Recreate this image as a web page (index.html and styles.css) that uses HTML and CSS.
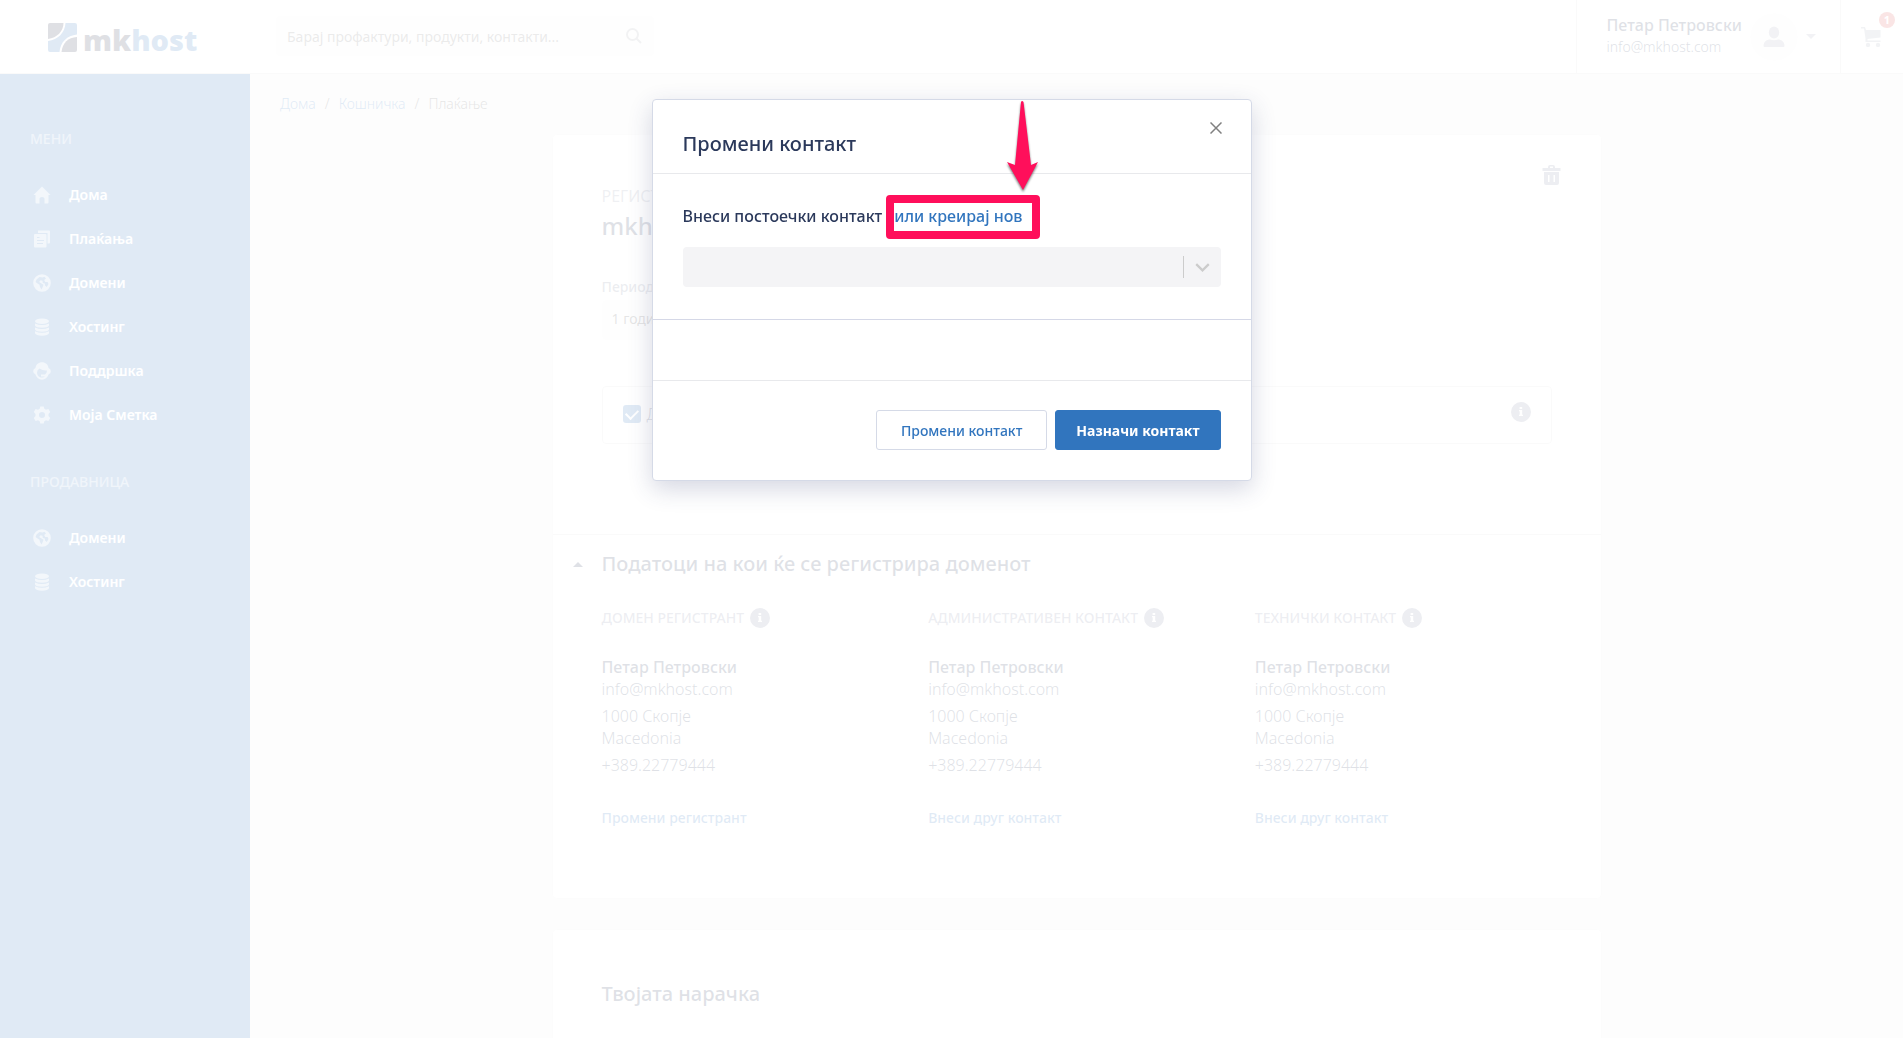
FILE: index.html
```html
<!DOCTYPE html>
<html lang="mk">
<head>
    <meta charset="UTF-8">
    <meta name="viewport" content="width=device-width, initial-scale=1">
    <title>mkhost - Плаќање</title>
    <link rel="stylesheet" href="styles.css">
</head>
<body>
<!-- shared icons -->
<svg class="sprite" width="0" height="0" aria-hidden="true">
    <symbol id="i-home" viewBox="0 0 18 18"><path d="M9 0.5 17.5 9H15.5V16.5Q15.5 17.5 14.5 17.5H11.5V12.5Q11.5 11 9 11T6.5 12.5V17.5H3.5Q2.5 17.5 2.5 16.5V9H0.500Z"/></symbol>
    <symbol id="i-docs" viewBox="0 0 18 18"><path d="M5 0.500H16Q17 0.500 17 1.500V12.500Q17 13.500 16 13.500H14.500V3H5Z"/><path fill-rule="evenodd" d="M2 4H12.500Q13.500 4 13.500 5V16.500Q13.500 17.500 12.500 17.500H2Q1 17.500 1 16.500V5Q1 4 2 4ZM4 7V8H6.500V7ZM4 10V11H11V10ZM4 13V14H10V13Z"/></symbol>
    <symbol id="i-globe" viewBox="0 0 18 18"><path fill-rule="evenodd" d="M9 0.200A8.800 8.800 0 1 1 9 17.800 8.800 8.800 0 0 1 9 0.200ZM6.500 3 9.500 3.400 11.500 2.800 13 4.500 11.200 6 12.200 8H14.600L15.500 10 13.800 13 12 11.500 11.800 9.500 9.800 9 9.500 6.800 7.500 6.200 6.200 8 8.500 9.500 10.500 10.800 9.500 13.500 8.500 15.500 7 13 6.500 10.800 3.800 9 2.600 8 3.500 5.500Z"/></symbol>
    <symbol id="i-db" viewBox="0 0 18 18"><ellipse cx="9" cy="3.300" rx="7" ry="2.800"/><path d="M2 5.500Q9 8.500 16 5.500V7.500Q15 9.700 9 9.700T2 7.500ZM2 9.400Q9 12.400 16 9.400V11.500Q15 13.700 9 13.700T2 11.500ZM2 13.300Q9 16.300 16 13.300V15.300Q15 17.700 9 17.700T2 15.300Z"/></symbol>
    <symbol id="i-support" viewBox="0 0 18 18"><path fill-rule="evenodd" d="M9 0.300C12.500 0.300 15 2.500 15.500 6Q17.800 7 17.800 9.300T15.700 12.300C14.500 15.800 12 17.700 9 17.700S3.500 15.800 2.300 12.300Q0.200 11.500 0.200 9.300T2.500 6C3 2.500 5.500 0.300 9 0.300ZM6.500 6.500Q4 8 4 10.500C4 13.500 6.300 15.600 9 15.600Q10.800 15.600 12 14.500H8V12.500H12Q13.800 11.800 14 8.500 10 9 6.500 6.500Z"/></symbol>
    <symbol id="i-gear" viewBox="0 0 18 18"><path fill-rule="evenodd" d="M7.300 0.600H10.700L11.300 2.700 13 3.700 15.400 3 17.200 6 15.500 7.900V10.100L17.200 12 15.400 15 13 14.300 11.300 15.300 10.700 17.400H7.300L6.700 15.300 5 14.300 2.600 15 0.800 12 2.500 10.100V7.900L0.800 6 2.600 3 5 3.700 6.700 2.700ZM9 6A3 3 0 1 0 9 12 3 3 0 0 0 9 6Z"/></symbol>
    <symbol id="i-info" viewBox="0 0 20 20"><path fill-rule="evenodd" d="M10 0A10 10 0 1 1 10 20 10 10 0 0 1 10 0ZM8.600 5V7H11.200V5ZM8 8V9.200H8.700V12.800H8V14H12V12.800H11.200V8Z"/></symbol>
</svg>

<div class="app">
    <header class="topbar">
        <a class="logo" href="#" aria-label="mkhost">
            <svg class="logo-mark" viewBox="0 0 29 29" width="29" height="29">
                <path class="navy" d="M2 0H15.500C15.500 8 9 15 0 16V2Q0 0 2 0Z"/>
                <path class="blue" d="M17.500 0H27Q29 0 29 2V11.500C19 12.500 12.500 19 11.500 29H2Q0 29 0 27V18C10 17 17 9.500 17.500 0Z"/>
                <path class="navy" d="M29 14V27Q29 29 27 29H13.500C14.500 20 20 14.500 29 14Z"/>
            </svg>
            <span class="logo-text"><span class="navy">mk</span><span class="blue">host</span></span>
        </a>
        <form class="search">
            <input type="search" aria-label="Барај" placeholder="Барај профактури, продукти, контакти...">
            <button type="button" aria-label="Барај">
                <svg viewBox="0 0 16 16" width="16" height="16"><circle cx="6.500" cy="6.500" r="5.500"/><path d="M10.500 10.500 15 15"/></svg>
            </button>
        </form>
        <div class="account">
            <div class="account-info">
                <strong>Петар Петровски</strong>
                <span>info@mkhost.com</span>
            </div>
            <button type="button" class="avatar" aria-label="Профил">
                <svg viewBox="0 0 22 22" width="22" height="22"><ellipse cx="11" cy="6.500" rx="5.200" ry="6"/><path d="M0.500 20C0.500 15.500 4 13.500 7 13.500Q11 15 15 13.500C18 13.500 21.500 15.500 21.500 20Q21.500 21 20.500 21H1.500Q0.500 21 0.500 20Z"/></svg>
            </button>
            <span class="caret-down"></span>
        </div>
        <a class="cart" href="#" aria-label="Кошничка">
            <svg viewBox="0 0 20 20" width="20" height="20"><path d="M0 0H4L5 3H19.500V10.500L6.500 12V13.500H19.500V15H4.500V11.500L3 1.500H0Z"/><circle cx="7" cy="18" r="2.200"/><circle cx="17" cy="18" r="2.200"/></svg>
            <span class="badge">1</span>
        </a>
    </header>

    <nav class="sidebar">
        <h6>Мени</h6>
        <ul>
            <li><a href="#"><svg><use href="#i-home"/></svg>Дома</a></li>
            <li><a href="#"><svg><use href="#i-docs"/></svg>Плаќања</a></li>
            <li><a href="#"><svg><use href="#i-globe"/></svg>Домени</a></li>
            <li><a href="#"><svg><use href="#i-db"/></svg>Хостинг</a></li>
            <li><a href="#"><svg><use href="#i-support"/></svg>Поддршка</a></li>
            <li><a href="#"><svg><use href="#i-gear"/></svg>Моја Сметка</a></li>
        </ul>
        <h6>Продавница</h6>
        <ul>
            <li><a href="#"><svg><use href="#i-globe"/></svg>Домени</a></li>
            <li><a href="#"><svg><use href="#i-db"/></svg>Хостинг</a></li>
        </ul>
    </nav>

    <main class="content">
        <div class="breadcrumb">
            <a href="#">Дома</a><span>/</span><a href="#">Кошничка</a><span>/</span><span>Плаќање</span>
        </div>

        <section class="card">
            <div class="card-head">
                <div class="product">
                    <p class="product-type">Регистрација</p>
                    <h3>mkhost.mk</h3>
                </div>
                <button type="button" class="remove" aria-label="Избриши">
                    <svg viewBox="0 0 20 20" width="20" height="20"><path fill-rule="evenodd" d="M6 3V2Q6 0 8 0H11Q13 0 13 2V3H18.500V6H0.500V3ZM8 3H11V1.500H8ZM2 7H17V18Q17 20 15 20H4Q2 20 2 18ZM6 10V17H7.500V10ZM11.500 10V17H13V10Z"/></svg>
                </button>
            </div>
            <div class="card-body">
                <label class="period-label" for="period">Период</label>
                <select id="period" class="period"><option>1 година</option></select>
                <div class="option">
                    <input type="checkbox" id="addon" checked>
                    <label for="addon">Додај</label>
                    <svg class="info"><use href="#i-info"/></svg>
                </div>
            </div>
            <div class="contacts">
                <h4><span class="caret-up"></span>Податоци на кои ќе се регистрира доменот</h4>
                <div class="contact-grid">
                    <div class="contact">
                        <h5>Домен регистрант <svg class="info"><use href="#i-info"/></svg></h5>
                        <p><strong>Петар Петровски</strong><br>info@mkhost.com</p>
                        <p>1000 Скопје<br>Macedonia</p>
                        <p>+389.22779444</p>
                        <a href="#">Промени регистрант</a>
                    </div>
                    <div class="contact">
                        <h5>Административен контакт <svg class="info"><use href="#i-info"/></svg></h5>
                        <p><strong>Петар Петровски</strong><br>info@mkhost.com</p>
                        <p>1000 Скопје<br>Macedonia</p>
                        <p>+389.22779444</p>
                        <a href="#">Внеси друг контакт</a>
                    </div>
                    <div class="contact">
                        <h5>Технички контакт <svg class="info"><use href="#i-info"/></svg></h5>
                        <p><strong>Петар Петровски</strong><br>info@mkhost.com</p>
                        <p>1000 Скопје<br>Macedonia</p>
                        <p>+389.22779444</p>
                        <a href="#">Внеси друг контакт</a>
                    </div>
                </div>
            </div>
        </section>

        <section class="card order">
            <h4>Твојата нарачка</h4>
        </section>
    </main>
</div>

<div class="overlay">
    <div class="modal" role="dialog" aria-labelledby="modal-title">
        <div class="modal-header">
            <h4 id="modal-title">Промени контакт</h4>
            <button type="button" class="close" aria-label="Затвори">
                <svg viewBox="0 0 12 12" width="12" height="12"><path d="M0.500 0.500 11.500 11.500M11.500 0.500 0.500 11.500"/></svg>
            </button>
        </div>
        <div class="modal-body">
            <div class="modal-label">
                <label for="contact">Внеси постоечки контакт</label>
                <a href="#">или креирај нов
                    <span class="mark"></span>
                    <svg class="arrow" viewBox="0 0 36 94" width="36" height="94"><path d="M16 3Q17 1 18.500 3L26 66 33 63 18 91 2 63 10 66Z"/></svg>
                </a>
            </div>
            <div class="select-wrap">
                <select id="contact" disabled><option></option></select>
                <svg viewBox="0 0 14 14" width="14" height="14"><path d="M1.500 4.500 7 10 12.500 4.500"/></svg>
            </div>
        </div>
        <div class="modal-extra"></div>
        <div class="modal-footer">
            <button type="button" class="btn">Промени контакт</button>
            <button type="button" class="btn btn-primary">Назначи контакт</button>
        </div>
    </div>
</div>
</body>
</html>
```

FILE: styles.css
```css
* { box-sizing: border-box; }
body {
    margin: 0;
    font-family: "Noto Sans", sans-serif;
    font-size: 16px;
    font-weight: 300;
    line-height: 22px;
    color: #2b395b;
    background-color: #f0f0f0;
}
h3, h4, h5, h6, p, ul { margin: 0; padding: 0; }
h3, h4 { font-weight: 500; }
a { color: #3175be; text-decoration: none; }
button { font-family: inherit; cursor: pointer; }
strong { font-weight: 500; }
.sprite { position: absolute; }
.navy { color: #2b2f4b; fill: #2b2f4b; }
.blue { color: #3175be; fill: #3175be; }

.app {
    display: grid;
    grid-template-columns: 250px 1fr;
    grid-template-rows: 74px 1fr;
    height: 100vh;
    overflow: hidden;
}

/* header */
.topbar { grid-column: 1 / 3; display: flex; background-color: #fff; border-bottom: 1px solid #dedede; }
.logo { display: flex; align-items: center; gap: 6px; width: 276px; padding: 2px 0 0 48px; }
.logo-mark { flex: none; }
.logo-text { padding-top: 5px; font-family: "Open Sans", sans-serif; font-weight: 800; font-size: 29px; line-height: 30px; }
.search { display: flex; align-items: center; width: 378px; height: 40px; margin: 16px auto 0 0; background-color: #f9f9f9; border-radius: 3px; }
.search input { flex: 1; min-width: 0; padding: 0 0 0 11px; border: 0; background: none; font-family: inherit; font-size: 14px; }
.search input::placeholder { color: #777; opacity: 1; }
.search button { display: flex; padding: 0 12px; border: 0; background: none; }
.search svg { fill: none; stroke: #a5a9b0; stroke-width: 2; }
.account { display: flex; align-items: center; padding: 0 24px 0 29px; border-left: 1px solid #dedede; }
.account-info { display: flex; flex-direction: column; padding-bottom: 2px; }
.account-info span { font-size: 14px; }
.avatar { display: flex; align-items: center; justify-content: center; width: 48px; height: 48px; margin: 0 8px; border: 0; border-radius: 50%; background-color: #f9f9f9; fill: #a5a9b8; }
.caret-down { border: 5px solid transparent; border-top-color: #a5a9b8; border-bottom: 0; }
.cart { position: relative; display: flex; align-items: center; width: 63px; padding-left: 20px; border-left: 1px solid #dedede; fill: #a5b0bd; }
.badge { position: absolute; top: 12px; left: 38px; width: 16px; height: 16px; border-radius: 50%; background-color: #d9534f; color: #fff; font-size: 11px; line-height: 16px; font-weight: 700; text-align: center; }

/* sidebar */
.sidebar { padding-top: 55px; background-color: #3175be; }
.sidebar h6 { padding-left: 30px; margin-bottom: 24px; font-size: 14px; line-height: 20px; font-weight: 500; text-transform: uppercase; color: rgba(255, 255, 255, .5); }
.sidebar ul { list-style: none; margin-bottom: 35px; }
.sidebar a { display: flex; align-items: center; gap: 18px; height: 44px; padding-left: 33px; color: #fff; font-size: 14px; font-weight: 600; }
.sidebar svg { width: 18px; height: 18px; fill: rgba(255, 255, 255, .6); }

/* content */
.content { padding: 20px 30px; min-width: 0; overflow: hidden; }
.breadcrumb { display: flex; gap: 9px; margin-bottom: 20px; font-size: 14px; line-height: 20px; color: #555; }
.card { max-width: 1050px; margin: 0 auto 30px; background-color: #fff; border: 1px solid #ececec; border-radius: 5px; }
.card-head { display: flex; justify-content: space-between; align-items: flex-start; padding: 30px 39px 35px 49px; }
.product { padding-top: 20px; }
.product-type { margin-bottom: 3px; font-weight: 400; text-transform: uppercase; opacity: .5; }
.product h3 { font-size: 24px; line-height: 32px; }
.remove { display: flex; padding: 0; border: 0; background: none; fill: #868ca6; }
.card-body { padding: 0 49px 90px; }
.period-label { display: block; margin-bottom: 3px; font-size: 14px; line-height: 20px; font-weight: 500; opacity: .6; }
.period { display: block; width: 250px; height: 40px; margin-bottom: 46px; padding: 0 10px 4px; border: 0; border-radius: 4px; background-color: #f9f9f9; appearance: none; font-family: inherit; font-size: 14px; color: #555; }
.option { display: flex; align-items: center; gap: 6px; height: 58px; padding: 0 20px 2px; border: 1px solid #dedede; border-radius: 4px; }
.option input { appearance: none; display: grid; place-items: center; width: 18px; height: 18px; margin: 0; border-radius: 3px; background-color: #3175be; }
.option input::before { content: ""; width: 10px; height: 6px; margin-bottom: 3px; border: solid #fff; border-width: 0 0 2px 2px; transform: rotate(-45deg); }
.option .info { margin: 0 0 4px auto; }
.info { width: 20px; height: 20px; fill: #868ca6; }
.contacts { padding: 15px 49px 70px; border-top: 1px solid #dedede; }
.contacts h4, .order h4 { font-size: 20px; line-height: 28px; }
.contacts h4 { display: flex; align-items: center; margin: 0 0 30px -29px; }
.caret-up { margin-right: 19px; border: 5px solid transparent; border-bottom-color: #2b395b; border-top: 0; }
.contact-grid { display: grid; grid-template-columns: repeat(3, 1fr); gap: 30px; }
.contact h5 { display: flex; align-items: center; gap: 6px; margin-bottom: 28px; font-size: 14px; line-height: 20px; font-weight: 500; text-transform: uppercase; color: #868ca6; }
.contact p { margin-bottom: 5px; }
.contact a { display: block; margin-top: 32px; font-size: 14px; line-height: 20px; font-weight: 500; }
.order { min-height: 300px; padding: 50px 49px; }

/* modal */
.overlay { position: fixed; inset: 0; display: flex; justify-content: center; align-items: flex-start; padding-top: 99px; background-color: rgba(255, 255, 255, .85); }
.modal { width: 100%; max-width: 600px; background-color: #fff; border: 1px solid #d5dae7; border-radius: 4px; box-shadow: 0 8px 24px rgba(43, 57, 110, .2); }
.modal-header { display: flex; justify-content: space-between; align-items: flex-start; padding: 22px 29px 15px 30px; border-bottom: 1px solid #e8e9ec; }
.modal-header h4 { padding-top: 8px; font-size: 20px; line-height: 28px; }
.close { display: flex; padding: 0; border: 0; background: none; fill: none; stroke: #808080; stroke-width: 1.5; }
.modal-body { padding: 31px 30px 32px; border-bottom: 1px solid #d5d8e7; }
.modal-label { display: flex; gap: 12px; margin-bottom: 20px; font-weight: 500; }
.modal-label a { position: relative; }
.mark { position: absolute; top: -10px; right: -18px; bottom: -12px; left: -8px; border: 8px solid #ff0f5b; border-radius: 4px; }
.arrow { position: absolute; left: 111px; top: -106px; fill: #ff0f5b; filter: drop-shadow(0 2px 1px rgba(0, 0, 0, .5)); }
.select-wrap { position: relative; }
.select-wrap select { display: block; width: 100%; height: 40px; border: 0; border-radius: 4px; background-color: #f4f4f6; appearance: none; opacity: 1; }
.select-wrap svg { position: absolute; top: 9px; right: 0; width: 38px; height: 22px; padding: 3px 10px; border-left: 1px solid #ccc; fill: none; stroke: #ccc; stroke-width: 2; }
.modal-extra { height: 61px; border-bottom: 1px solid #e8e9ec; }
.modal-footer { display: flex; justify-content: flex-end; gap: 8px; padding: 29px 30px 30px; }
.btn { height: 40px; padding: 0 24px; border: 1px solid #d5dae7; border-radius: 3px; background-color: #fff; color: #3175be; font-size: 14px; font-weight: 500; }
.btn-primary { padding: 0 20px; border-color: #3175be; background-color: #3175be; color: #fff; font-weight: 700; }
```
